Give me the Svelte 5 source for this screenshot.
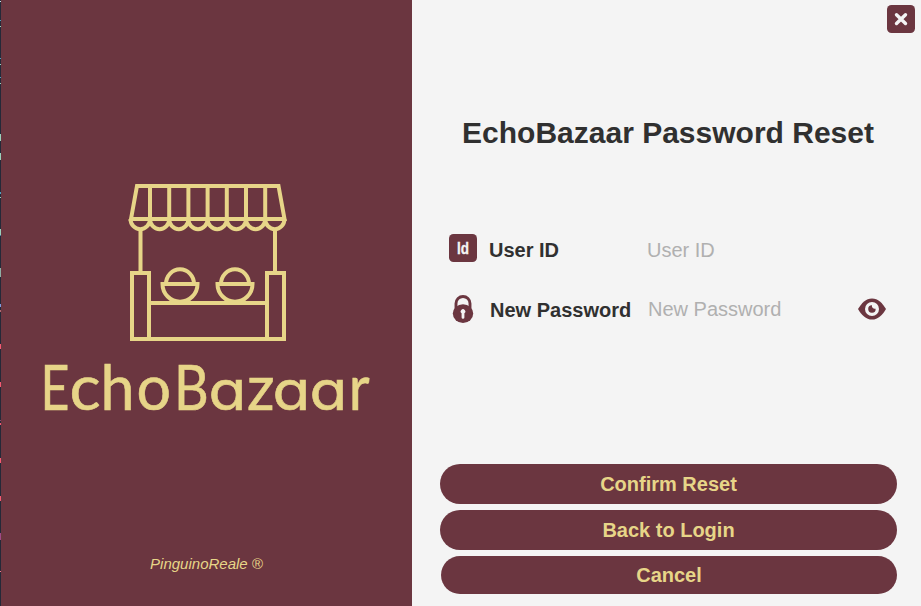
<script>
  let userId = $state('');
  let password = $state('');
  let visible = $state(false);

  // coloured ticks on the dark strip at the window's left edge: [y, height, colour]
  const ticks = [
    [1, 1, '#c5e4e6'], [20, 1, '#4f9fbd'], [26, 1, '#9bd1bb'], [58, 1, '#4f9fbd'],
    [64, 1, '#9bd1bb'], [77, 1, '#4f9fbd'], [83, 1, '#9bd1bb'], [134, 7, '#9bd1bb'],
    [153, 7, '#9bd1bb'], [192, 2, '#4f9fbd'], [197, 1, '#9bd1bb'], [229, 6, '#9bd1bb'],
    [235, 1, '#4f7fa0'], [268, 9, '#8fb0a5'], [304, 3, '#7f9be0'], [310, 2, '#b06a72'],
    [344, 5, '#f55a72'], [382, 5, '#f55a72'], [420, 1, '#8d4a78'], [423, 2, '#f55a72'],
    [458, 5, '#f55a72'], [496, 5, '#f55a72'], [533, 7, '#a04a85'], [571, 1, '#f07a90']
  ];
  // each letter of the wordmark: [letter, x, horizontal scale]
  const wordmark = [
    ['E', 40.5, 0.82], ['c', 69.6, 1.07], ['h', 100.5, 1], ['o', 136.5, 1], ['B', 174, 0.88],
    ['a', 208.6, 1.12], ['z', 247, 1], ['a', 272.6, 1.12], ['a', 309.6, 1.12], ['r', 348.7, 0.94]
  ];
  const stripes = [150, 169.2, 188.4, 207.6, 226.8, 246, 265.2];
  const scallops = [130.5, 150, 169.2, 188.4, 207.6, 226.8, 246, 265.2, 284.5];
</script>

<main>
  <aside>
    <svg class="edge" width="1" height="606" aria-hidden="true">
      <rect width="1" height="606" fill="#242938" />
      {#each ticks as [y, h, c]}
        <rect {y} width="1" height={h} fill={c} />
      {/each}
    </svg>
    <svg class="logo" viewBox="0 175 412 250" width="412" height="250" role="img" aria-label="EchoBazaar">
      <g fill="none" stroke="#e7d588" stroke-width="4">
        <path d="M131 219L137 186H278.500L284.500 219Z" />
        {#each stripes as x}
          <path d="M{x} 186V219" />
        {/each}
        {#each scallops.slice(0, -1) as x, i}
          <path d="M{x} 219A{(scallops[i + 1] - x) / 2} 10.200 0 0 0 {scallops[i + 1]} 219" />
        {/each}
        <path d="M140.500 229V273M275 229V273" />
        <path d="M132 273H149V339H132ZM267 273H284V339H267ZM149 303H267M149 339H267" />
        {#each [180, 235] as x}
          <path d="M{x - 14} 284A14 14.800 0 0 1 {x + 14} 284M{x - 17.500} 284H{x + 17.500}A17.500 17.700 0 0 1 {x - 17.500} 284Z" />
        {/each}
      </g>
      {#each wordmark as [ch, x, s]}
        <text class="wordmark" class:round={ch === 'a'} transform="translate({x} 410) scale({s} 1)">{ch}</text>
      {/each}
    </svg>
    <p>PinguinoReale ®</p>
  </aside>

  <section>
    <button class="close" aria-label="Close">
      <svg width="28" height="28" viewBox="0 0 28 28">
        <rect width="28" height="28" rx="4.500" fill="#6b3640" />
        <path d="M9.500 9.700L18.500 18.500M18.500 9.700L9.500 18.500" stroke="#f4f4f4" stroke-width="3.400" stroke-linecap="round" />
      </svg>
    </button>
    <h1>EchoBazaar Password Reset</h1>

    <div class="row">
      <svg width="28" height="28" viewBox="0 0 28 28">
        <rect width="28" height="28" rx="4.500" fill="#6b3640" />
        <text x="8.100" y="19.700" class="id" textLength="12" lengthAdjust="spacingAndGlyphs">Id</text>
      </svg>
      <label for="user">User ID</label>
      <input id="user" placeholder="User ID" bind:value={userId} />
    </div>

    <div class="row second">
      <svg width="28" height="28" viewBox="0 0 28 28">
        <path d="M7 15V8.500A7 7 0 0 1 21 8.500V15" fill="none" stroke="#6b3640" stroke-width="2.900" />
        <ellipse cx="14" cy="18.600" rx="10.200" ry="9.400" fill="#6b3640" />
        <path d="M12.600 18.300A2.300 2.300 0 1 1 15.400 18.300V22.400A1.400 1.400 0 0 1 12.600 22.400Z" fill="#f4f4f4" />
      </svg>
      <label for="pass">New Password</label>
      <input id="pass" type={visible ? 'text' : 'password'} placeholder="New Password" bind:value={password} />
      <button class="eye" aria-label="Show password" onclick={() => (visible = !visible)}>
        <svg width="28" height="28" viewBox="0 0 28 28">
          <path d="M0 14C3.500 8 8 3.400 14 3.400S24.500 8 28 14C24.500 20 20 24.600 14 24.600S3.500 20 0 14Z" fill="#6b3640" />
          <circle cx="14" cy="14" r="7" fill="#f4f4f4" />
          <path d="M14 10.300A2.800 2.800 0 0 0 17.600 13.700A3.700 3.700 0 1 1 14 10.300Z" fill="#6b3640" />
        </svg>
      </button>
    </div>

    <div class="actions">
      <button>Confirm Reset</button>
      <button>Back to Login</button>
      <button class="cancel">Cancel</button>
    </div>
  </section>
</main>

<style>
  :global(body) { margin: 0; }
  main {
    display: flex;
    width: 921px;
    height: 606px;
    overflow: hidden;
    background: #f4f4f4;
    font-family: 'Liberation Sans', Arial, sans-serif;
  }
  aside {
    position: relative;
    display: flex;
    flex-direction: column;
    align-items: center;
    box-sizing: border-box;
    width: 412px;
    padding-top: 175px;
    background: #6b3640;
    color: #e7d588;
  }
  .edge { position: absolute; left: 0; top: 0; }
  svg { display: block; flex: none; }
  .wordmark {
    font-family: Lato, sans-serif;
    font-size: 61px;
    fill: #e7d588;
    stroke: #e7d588;
    stroke-width: 0.6px;
  }
  .round {
    font-family: Inter, sans-serif;
    font-size: 55px;
    font-feature-settings: 'cv11' 1;
  }
  aside p {
    margin: 129px 0 0 1px;
    font-size: 15px;
    line-height: 20px;
    font-style: italic;
  }
  section {
    display: flex;
    flex-direction: column;
    box-sizing: border-box;
    width: 509px;
    padding: 5px 6px 0 28px;
  }
  button {
    padding: 0;
    border: 0;
    background: none;
    font-family: inherit;
    cursor: pointer;
  }
  .close { align-self: flex-end; height: 28px; }
  h1 {
    margin: 82px 19px 0 0;
    text-align: center;
    font-size: 30px;
    line-height: 36px;
    color: #303030;
  }
  .row {
    display: flex;
    align-items: center;
    height: 28px;
    margin: 83px 0 0 9px;
  }
  .row.second { margin-top: 33px; }
  .id {
    font: bold 16.5px 'Liberation Sans', sans-serif;
    fill: #f4f4f4;
    stroke: #f4f4f4;
    stroke-width: 0.3px;
  }
  label {
    box-sizing: border-box;
    width: 170px;
    padding: 3px 0 0 12px;
    font-size: 20px;
    line-height: 24px;
    font-weight: bold;
    color: #303030;
  }
  .second label { width: 171px; padding: 1px 0 0 13px; }
  input {
    width: 210px;
    height: 24px;
    padding: 4px 0 0;
    border: 0;
    outline: 0;
    background: none;
    font: 20px 'Liberation Sans', Arial, sans-serif;
    color: #303030;
  }
  .second input { padding: 0; }
  input::placeholder { color: #b0b0b0; opacity: 1; }
  .eye { height: 28px; }
  .actions {
    display: flex;
    flex-direction: column;
    gap: 6px;
    width: 457px;
    margin-top: 141px;
  }
  .actions button {
    height: 40px;
    border-radius: 20px;
    background: #6b3640;
    color: #e7d588;
    font-size: 20px;
    font-weight: bold;
  }
  .actions .cancel { height: 38px; margin-left: 1px; }
</style>
